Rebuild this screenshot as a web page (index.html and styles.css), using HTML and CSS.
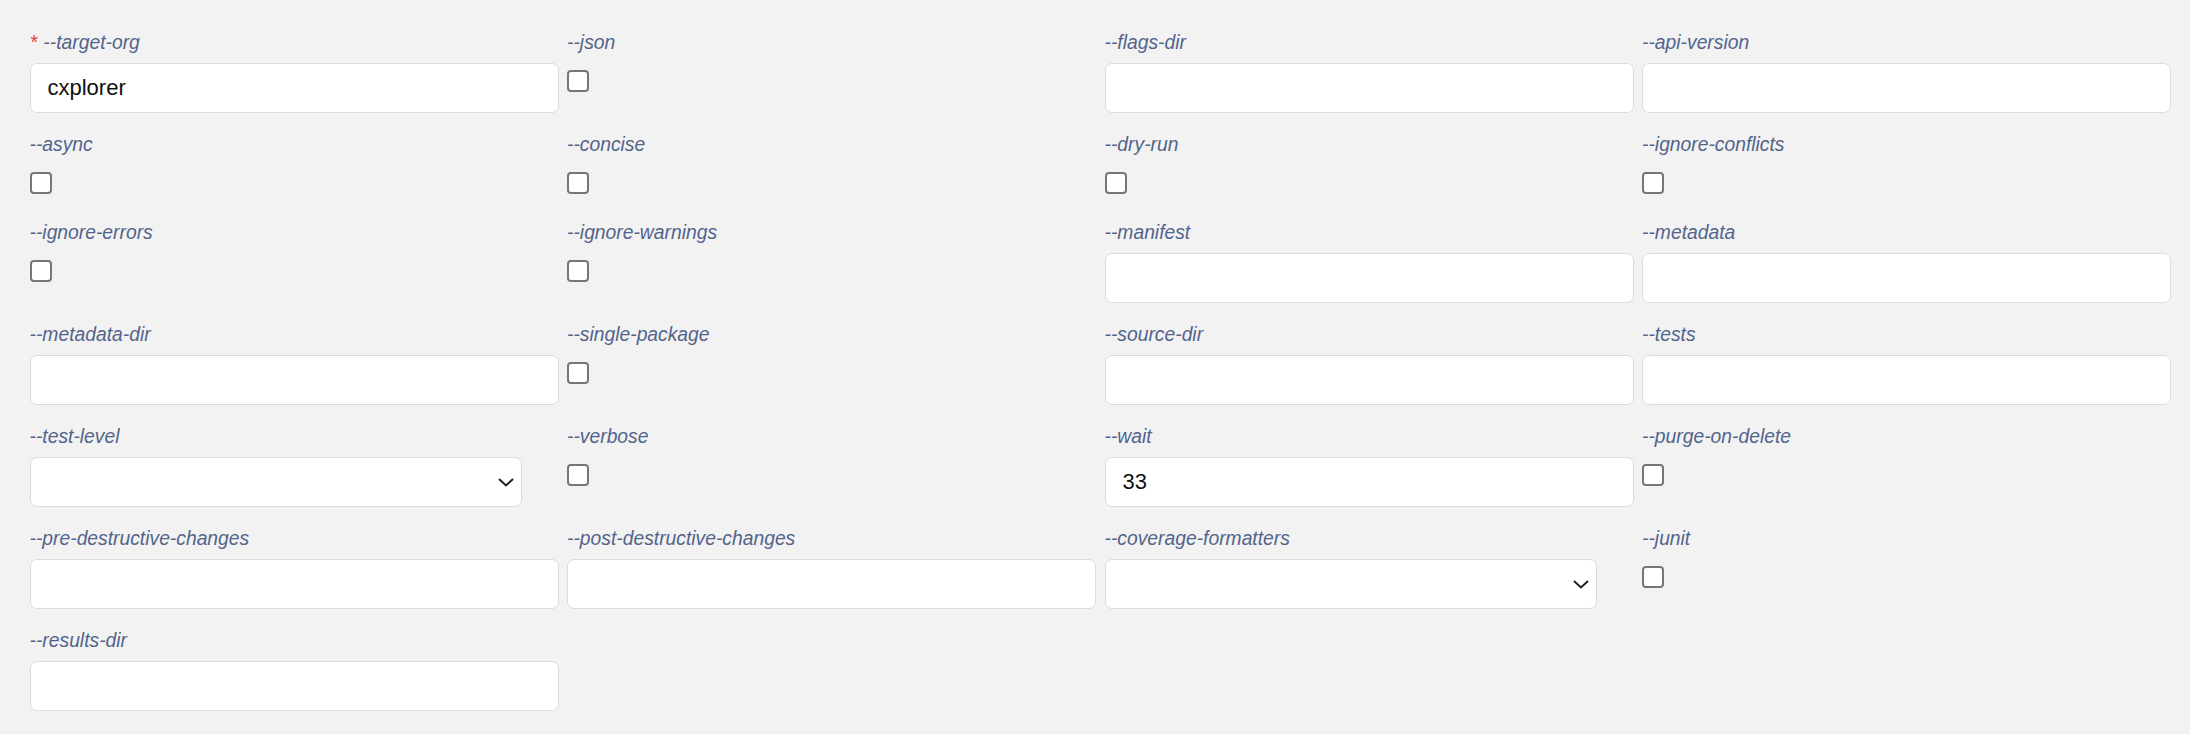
FILE: index.html
```html
<!DOCTYPE html>
<html lang="en">
<head>
    <meta charset="UTF-8">
    <title>deploy flags</title>
    <link rel="stylesheet" href="styles.css">
</head>
<body>
    <div class="flags">
        <div class="field">
            <label><span class="req">*</span> --target-org</label>
            <input type="text" class="text" value="cxplorer">
        </div>
        <div class="field">
            <label>--json</label>
            <input type="checkbox" class="check">
        </div>
        <div class="field">
            <label>--flags-dir</label>
            <input type="text" class="text">
        </div>
        <div class="field">
            <label>--api-version</label>
            <input type="text" class="text">
        </div>

        <div class="field">
            <label>--async</label>
            <input type="checkbox" class="check">
        </div>
        <div class="field">
            <label>--concise</label>
            <input type="checkbox" class="check">
        </div>
        <div class="field">
            <label>--dry-run</label>
            <input type="checkbox" class="check">
        </div>
        <div class="field">
            <label>--ignore-conflicts</label>
            <input type="checkbox" class="check">
        </div>

        <div class="field">
            <label>--ignore-errors</label>
            <input type="checkbox" class="check">
        </div>
        <div class="field">
            <label>--ignore-warnings</label>
            <input type="checkbox" class="check">
        </div>
        <div class="field">
            <label>--manifest</label>
            <input type="text" class="text">
        </div>
        <div class="field">
            <label>--metadata</label>
            <input type="text" class="text">
        </div>

        <div class="field">
            <label>--metadata-dir</label>
            <input type="text" class="text">
        </div>
        <div class="field">
            <label>--single-package</label>
            <input type="checkbox" class="check">
        </div>
        <div class="field">
            <label>--source-dir</label>
            <input type="text" class="text">
        </div>
        <div class="field">
            <label>--tests</label>
            <input type="text" class="text">
        </div>

        <div class="field">
            <label>--test-level</label>
            <div class="select-wrap">
                <select class="pick"><option></option></select>
                <svg class="chev" width="16" height="9" viewBox="0 0 16 9"><path d="M1 1 L8 7.5 L15 1" fill="none" stroke="#1f1f1f" stroke-width="2"/></svg>
            </div>
        </div>
        <div class="field">
            <label>--verbose</label>
            <input type="checkbox" class="check">
        </div>
        <div class="field">
            <label>--wait</label>
            <input type="text" class="text" value="33">
        </div>
        <div class="field">
            <label>--purge-on-delete</label>
            <input type="checkbox" class="check">
        </div>

        <div class="field">
            <label>--pre-destructive-changes</label>
            <input type="text" class="text">
        </div>
        <div class="field">
            <label>--post-destructive-changes</label>
            <input type="text" class="text">
        </div>
        <div class="field">
            <label>--coverage-formatters</label>
            <div class="select-wrap">
                <select class="pick"><option></option></select>
                <svg class="chev" width="16" height="9" viewBox="0 0 16 9"><path d="M1 1 L8 7.5 L15 1" fill="none" stroke="#1f1f1f" stroke-width="2"/></svg>
            </div>
        </div>
        <div class="field">
            <label>--junit</label>
            <input type="checkbox" class="check">
        </div>

        <div class="field">
            <label>--results-dir</label>
            <input type="text" class="text">
        </div>
    </div>
</body>
</html>
```

FILE: styles.css
```css
body { margin: 0; background: #f2f2f2; font-family: "Liberation Sans", Arial, sans-serif; }
.flags { display: grid; grid-template-columns: repeat(4, 1fr); column-gap: 8.5px; row-gap: 20px; padding: 31px 19px 0 29.5px; }
.field { display: flex; flex-direction: column; align-items: flex-start; }
.field label { font-size: 19.3px; line-height: 23px; font-style: italic; color: #52648b; margin-bottom: 9px; }
.req { color: #e8392f; font-style: normal; margin-left: 1px; }
.text { box-sizing: border-box; width: 100%; height: 50px; margin: 0; padding: 0 17px; border: 1px solid #d9dbe6; border-radius: 7px; background: #fff; font-family: "Liberation Sans", Arial, sans-serif; font-size: 22px; color: #111; outline: none; }
.check { appearance: none; -webkit-appearance: none; box-sizing: border-box; width: 22px; height: 22px; margin: 7px 0; border: 2px solid #767676; border-radius: 4px; background: #fff; }
.select-wrap { position: relative; width: calc(100% - 37px); }
.pick { appearance: none; -webkit-appearance: none; box-sizing: border-box; width: 100%; height: 50px; margin: 0; padding: 0 17px; border: 1px solid #d9dbe6; border-radius: 7px; background: #fff; font-size: 22px; outline: none; }
.chev { position: absolute; right: 8px; top: 21px; }
```
